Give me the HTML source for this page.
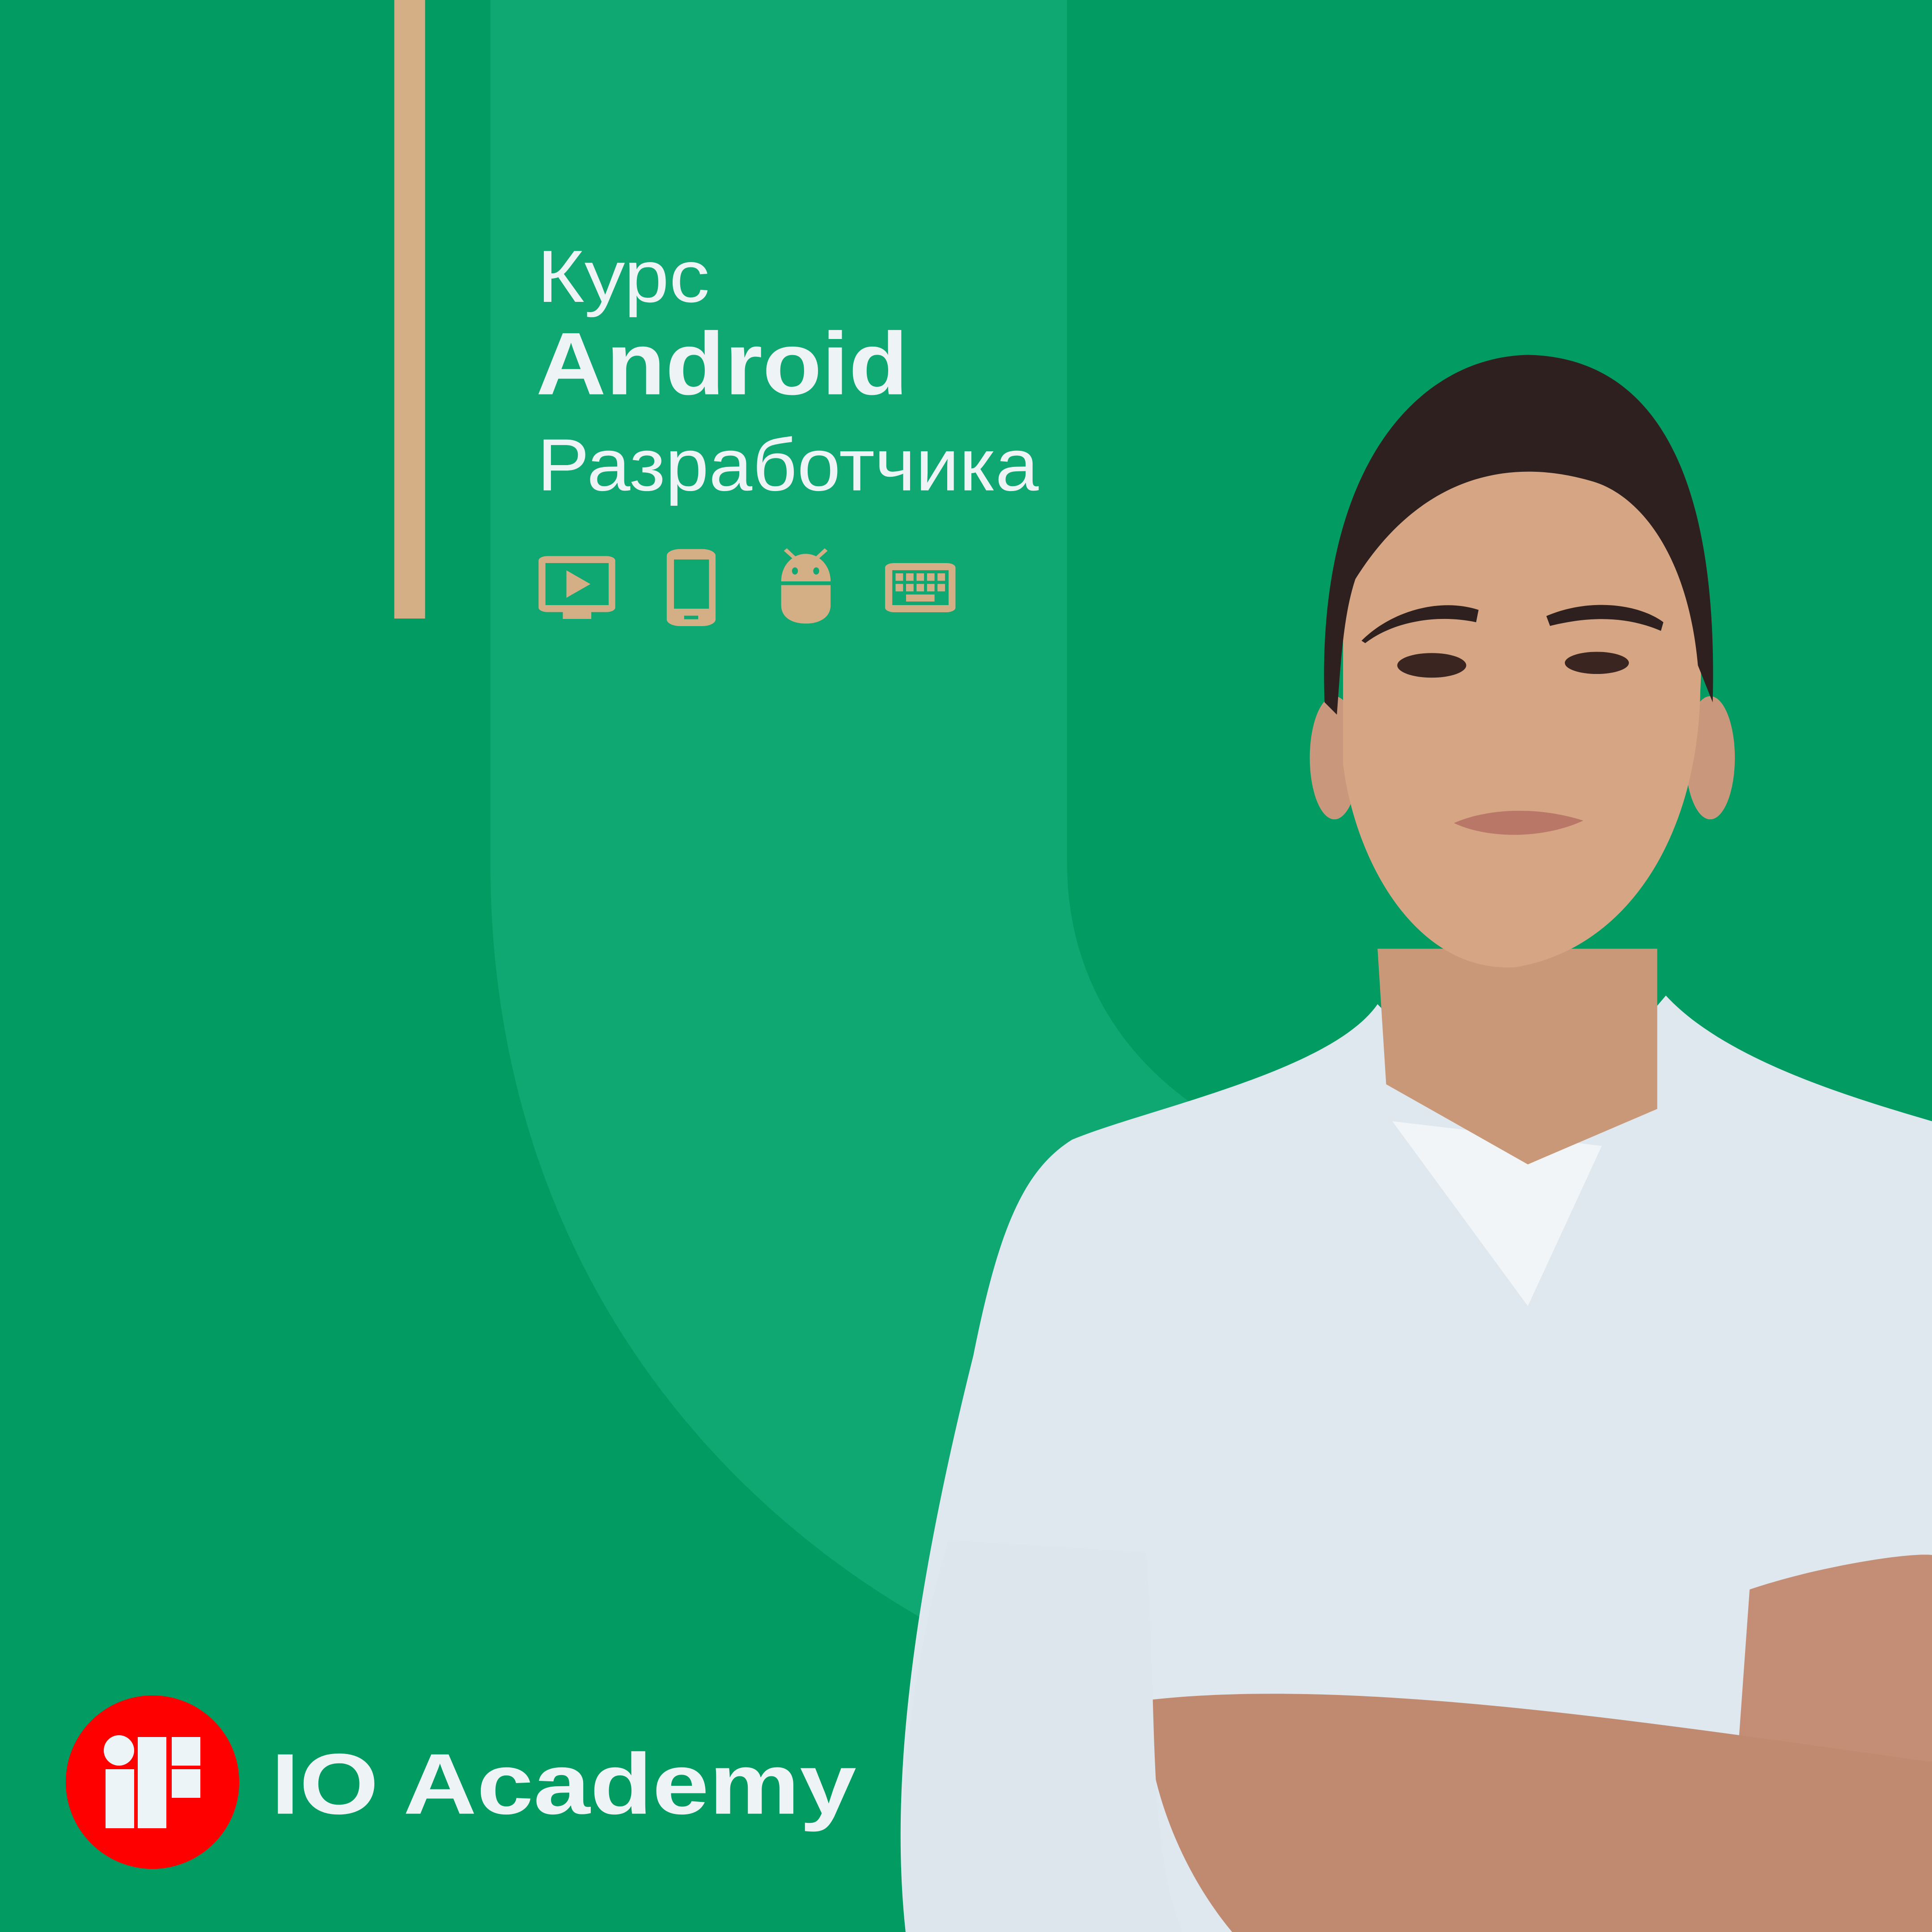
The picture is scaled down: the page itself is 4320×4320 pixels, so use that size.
<!DOCTYPE html>
<html><head><meta charset="utf-8"><style>
html,body{margin:0;padding:0;background:#029c63;}
svg{display:block}
</style></head><body>
<svg width="4320" height="4320" viewBox="0 0 4320 4320" xmlns="http://www.w3.org/2000/svg">
<rect width="4320" height="4320" fill="#029c63"/>
<g transform="scale(2.7551)">
  <path d="M398,0 H866 V700 C866,800 920,870 990,910 L760,1320 C560,1210 398,1000 398,700 Z" fill="#10a872"/>
  <rect x="320" y="0" width="25" height="502" fill="#d4ae85"/>
  <g font-family="'Liberation Sans','DejaVu Sans',sans-serif" fill="#eef4f6">
    <text x="436" y="245" font-size="60" textLength="140" lengthAdjust="spacingAndGlyphs">Курс</text>
    <text x="435" y="320" font-size="72" font-weight="bold" textLength="302" lengthAdjust="spacingAndGlyphs">Android</text>
    <text x="436" y="398" font-size="60" textLength="407" lengthAdjust="spacingAndGlyphs">Разработчика</text>
    <text x="220" y="1472" font-size="70" font-weight="bold" textLength="475" lengthAdjust="spacingAndGlyphs">IO Academy</text>
  </g>
  <!-- person -->
  <path d="M870,925 C930,900 1080,870 1118,815 L1240,940 L1352,808 C1400,860 1500,890 1568,910 V1568 H735 C722,1450 740,1300 790,1100 C810,1000 830,950 870,925 Z" fill="#dfe8ee"/>
  <path d="M1130,910 L1300,930 L1240,1060 Z" fill="#f2f5f7"/>
  <path d="M1118,770 L1345,770 L1345,900 L1240,945 L1125,880 Z" fill="#c99878"/>
  <ellipse cx="1083" cy="615" rx="20" ry="50" fill="#c9977b"/>
  <ellipse cx="1388" cy="615" rx="20" ry="50" fill="#c9977b"/>
  <path d="M1090,470 C1100,420 1200,370 1280,380 C1360,390 1385,470 1380,560 C1378,680 1320,770 1230,785 C1150,790 1100,700 1090,620 Z" fill="#d6a584"/>
  <path d="M1075,570 C1068,380 1150,290 1240,288 C1340,290 1395,380 1390,570 L1378,540 C1370,450 1330,400 1290,390 C1220,370 1150,390 1100,470 C1090,500 1088,540 1085,580 Z" fill="#2d201e"/>
  <path d="M1105,520 C1130,495 1170,485 1200,495 L1198,505 C1165,498 1130,505 1108,522Z" fill="#2d201e"/>
  <path d="M1255,500 C1290,485 1330,490 1350,505 L1348,512 C1320,500 1290,500 1258,508Z" fill="#2d201e"/>
  <ellipse cx="1162" cy="540" rx="28" ry="10" fill="#3a2520"/>
  <ellipse cx="1296" cy="538" rx="26" ry="9" fill="#3a2520"/>
  <path d="M1180,668 C1210,655 1250,655 1285,666 C1255,680 1210,682 1180,668Z" fill="#b87767"/>
  <path d="M1420,1290 C1480,1270 1550,1260 1568,1262 V1568 H1400 Z" fill="#c48e76"/>
  <path d="M930,1380 C1100,1360 1350,1400 1568,1430 V1568 H1000 C960,1520 930,1450 930,1380Z" fill="#c08a70"/>
  <path d="M735,1568 C725,1450 745,1330 770,1250 L930,1260 C940,1380 930,1500 960,1568Z" fill="#dde6ec"/>
</g>
<!-- icons -->
<g transform="translate(1150,1180) scale(0.6697,0.3333)" fill="#d4ae85">
  <rect x="81" y="190" width="256" height="376" rx="30"/>
  <rect x="104" y="237" width="211" height="282" fill="#10a872"/>
  <rect x="162" y="560" width="95" height="52"/>
  <polygon points="174,286 254,378 174,470"/>
  <rect x="509" y="143" width="163" height="517" rx="45"/>
  <rect x="533" y="213" width="117" height="330" fill="#10a872"/>
  <rect x="567" y="590" width="47" height="24" fill="#10a872"/>
  <path d="M891,360 C891,250 930,175 973,175 C1016,175 1056,250 1056,360 Z"/>
  <path d="M891,385 H1056 V520 C1056,600 1020,643 973,643 C926,643 891,600 891,520 Z"/>
  <polygon points="900,155 910,138 940,195 928,205"/>
  <polygon points="1046,155 1036,138 1006,195 1018,205"/>
  <ellipse cx="937" cy="290" rx="10" ry="24" fill="#10a872"/>
  <ellipse cx="1008" cy="290" rx="10" ry="24" fill="#10a872"/>
  <rect x="1238" y="237" width="235" height="330" rx="30"/>
  <rect x="1262" y="285" width="188" height="234" fill="#10a872"/>
  <rect x="1273" y="306" width="25" height="50"/><rect x="1308" y="306" width="25" height="50"/><rect x="1343" y="306" width="25" height="50"/><rect x="1378" y="306" width="25" height="50"/><rect x="1413" y="306" width="25" height="50"/>
  <rect x="1273" y="377" width="25" height="50"/><rect x="1308" y="377" width="25" height="50"/><rect x="1343" y="377" width="25" height="50"/><rect x="1378" y="377" width="25" height="50"/><rect x="1413" y="377" width="25" height="50"/>
  <rect x="1308" y="448" width="95" height="47"/>
</g>
<!-- logo -->
<circle cx="341" cy="3985" r="194" fill="#fe0000"/>
<g fill="#edf4f7">
  <circle cx="266" cy="3914" r="34"/>
  <rect x="236" y="3956" width="64" height="132"/>
  <rect x="308" y="3884" width="64" height="204"/>
  <rect x="384" y="3884" width="64" height="64"/>
  <rect x="384" y="3956" width="64" height="64"/>
</g>
</svg>
</body></html>
